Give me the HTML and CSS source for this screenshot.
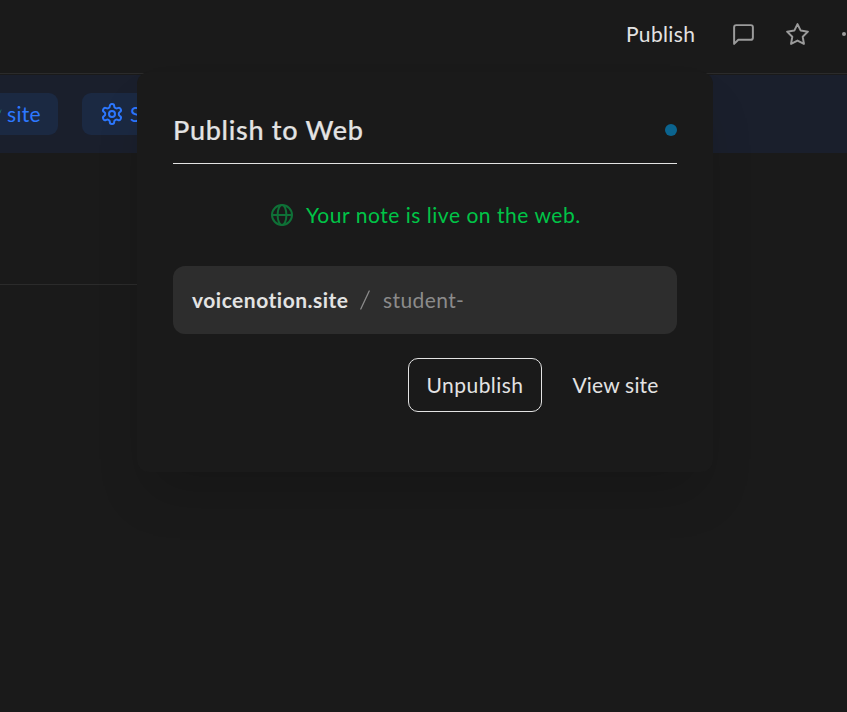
FILE: index.html
```html
<!DOCTYPE html>
<html lang="en">
<head>
<meta charset="utf-8">
<title>Publish to Web</title>
<link rel="stylesheet" href="styles.css">
</head>
<body>
<header class="topbar">
  <div class="publish-wrap">
    <button class="publish"><span class="t-publish">Publish</span></button>
    <section class="popover">
      <div class="heading"><h1 class="t-title">Publish to Web</h1><span class="dot"></span></div>
      <div class="status">
        <svg class="globe" viewBox="0 0 24 24"><circle cx="12" cy="12" r="10"/><ellipse cx="12" cy="12" rx="4.4" ry="10"/><path d="M2 12h20"/></svg>
        <span class="t-status">Your note is live on the web.</span>
      </div>
      <div class="address"><strong class="t-domain">voicenotion.site</strong><svg class="slash" viewBox="0 0 10 20"><path d="M.8 19L9.2 1"/></svg><span class="t-slug">student-</span></div>
      <div class="actions">
        <button class="unpublish"><span class="t-unpublish">Unpublish</span></button>
        <button class="view"><span class="t-view">View site</span></button>
      </div>
    </section>
  </div>
  <svg class="icon comment" viewBox="0 0 24 24"><path d="M21 15a2 2 0 0 1-2 2H7l-4 4V5a2 2 0 0 1 2-2h14a2 2 0 0 1 2 2z"/></svg>
  <svg class="icon star" viewBox="0 0 24 24"><path d="M12 2l3.09 6.26L22 9.27l-5 4.87 1.18 6.88L12 17.77l-6.18 3.25L7 14.14 2 9.27l6.91-1.01z"/></svg>
  <span class="more"></span>
</header>
<nav class="banner">
  <a class="pill first"><svg class="edge" viewBox="0 0 3 12"><path d="M0 5L1 2"/></svg><span class="t-site">site</span></a>
  <a class="pill second">
    <svg class="gear" viewBox="0 0 24 24"><path d="M12.2 2h-.4a2 2 0 0 0-2 2v.2a2 2 0 0 1-1 1.7l-.4.3a2 2 0 0 1-2 0l-.2-.1a2 2 0 0 0-2.7.7l-.2.4a2 2 0 0 0 .7 2.7l.2.1a2 2 0 0 1 1 1.7v.5a2 2 0 0 1-1 1.8l-.2.1a2 2 0 0 0-.7 2.7l.2.4a2 2 0 0 0 2.7.7l.2-.1a2 2 0 0 1 2 0l.4.3a2 2 0 0 1 1 1.7v.2a2 2 0 0 0 2 2h.4a2 2 0 0 0 2-2v-.2a2 2 0 0 1 1-1.7l.4-.3a2 2 0 0 1 2 0l.2.1a2 2 0 0 0 2.7-.7l.2-.4a2 2 0 0 0-.7-2.7l-.2-.1a2 2 0 0 1-1-1.8v-.5a2 2 0 0 1 1-1.7l.2-.1a2 2 0 0 0 .7-2.7l-.2-.4a2 2 0 0 0-2.7-.7l-.2.1a2 2 0 0 1-2 0l-.4-.3a2 2 0 0 1-1-1.7V4a2 2 0 0 0-2-2z"/><circle cx="12" cy="12" r="3"/></svg>
    <span>S</span>
  </a>
</nav>
<main class="page"><hr></main>
</body>
</html>
```
FILE: styles.css
```css
* { box-sizing: border-box; }
body { margin: 0; height: 712px; overflow: hidden; background: #1a1a1a; color: #e3e3e3; font: 400 21px/30px Lato, "Open Sans", sans-serif; font-variant-ligatures: none; }
button { padding: 0; border: 0; background: none; color: inherit; font: inherit; white-space: nowrap; }
svg { fill: none; stroke: currentColor; stroke-width: 2; stroke-linecap: round; stroke-linejoin: round; flex: none; }
.topbar { height: 75px; padding: 0 0 7px 626px; display: flex; align-items: center; position: relative; }
.topbar::after { content: ""; position: absolute; left: 0; right: 0; top: 73px; height: 1px; background: #2b2b2b; }
.publish-wrap { width: 104.5px; flex: none; }
.publish { display: block; text-align: left; }
.t-publish { letter-spacing: .35px; }
.icon { width: 25px; height: 25px; color: #9b9b9b; stroke-width: 1.9; }
.star { margin-left: 29px; }
.more { width: 4px; height: 4px; border-radius: 50%; background: #9b9b9b; margin-left: 32px; flex: none; }
.popover { position: absolute; z-index: 2; left: 137px; top: 72px; width: 576px; height: 400px; padding: 33px 36px 36px; border-radius: 12px; background: #1a1a1a; box-shadow: 0 30px 48px -12px rgba(0, 0, 0, .17); }
.heading { height: 59px; border-bottom: 1px solid #e3e3e3; display: flex; align-items: center; justify-content: space-between; padding-bottom: 8px; }
h1 { margin: 0; font-size: 27px; line-height: 36px; font-weight: 500; letter-spacing: .7px; -webkit-text-stroke: .2px currentColor; }
.dot { width: 12px; height: 12px; border-radius: 50%; background: #0b648f; }
.status { height: 30px; margin-top: 36px; padding-left: 97px; display: flex; align-items: center; gap: 12px; color: #00c447; white-space: nowrap; }
.t-status { letter-spacing: .53px; }
.globe { width: 24px; height: 24px; color: #0f7137; stroke-width: 2; }
.address { height: 68px; margin-top: 36px; padding-left: 19px; display: flex; align-items: center; border-radius: 12px; background: #2d2d2d; }
.t-domain { width: 168px; font-weight: 700; letter-spacing: .5px; }
.slash { width: 10px; height: 20px; margin-right: 13px; color: #8b8b8b; stroke-width: 1.3; }
.t-slug { color: #8b8b8b; letter-spacing: .4px; }
.actions { height: 54px; margin-top: 24px; display: flex; justify-content: flex-end; gap: 12px; }
.unpublish { width: 134px; border: 1px solid #e3e3e3; border-radius: 10px; }
.t-unpublish { letter-spacing: .45px; }
.view { width: 123px; }
.t-view { letter-spacing: .2px; }
.banner { height: 78px; display: flex; align-items: center; gap: 24px; background: #1a1f2c; color: #2d78ff; }
.pill { height: 42px; display: flex; align-items: center; background: #1b2942; }
.first { width: 58px; border-radius: 0 9px 9px 0; }
.edge { width: 3px; height: 12px; margin-right: 4px; color: #24645e; stroke-width: 1; }
.t-site { letter-spacing: .3px; }
.second { width: 150px; padding-left: 18px; gap: 6px; border-radius: 9px; }
.gear { width: 24px; height: 24px; }
.page { padding-top: 131px; }
hr { margin: 0; border: 0; height: 1px; background: #2b2b2b; width: 600px; }
```
